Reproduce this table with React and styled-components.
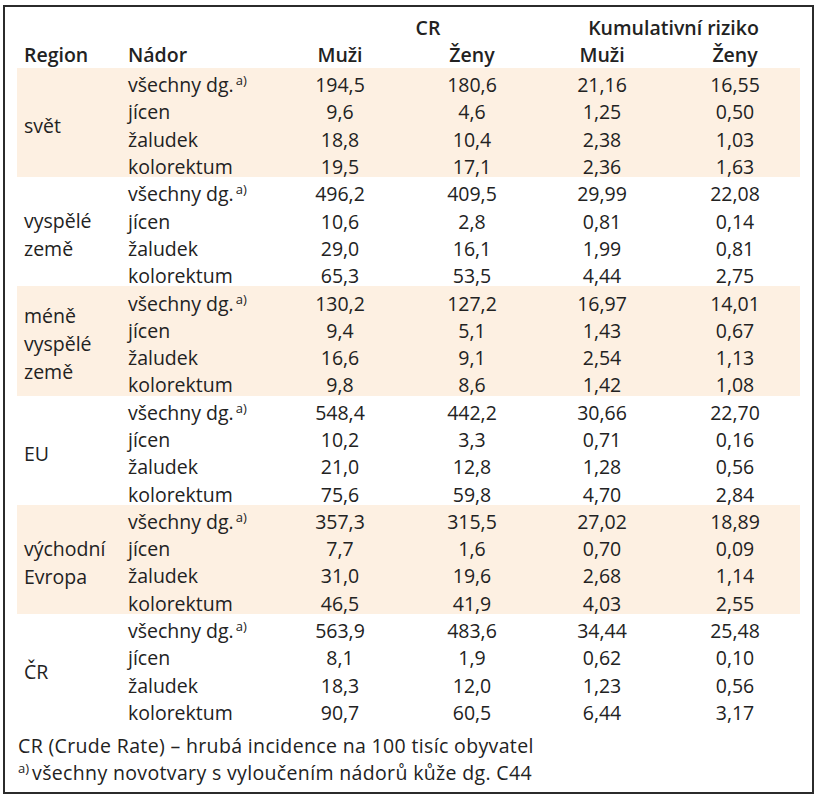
import React from 'react';
import styled, { createGlobalStyle } from 'styled-components';

const GlobalStyle = createGlobalStyle`
  html, body {
    margin: 0;
    padding: 0;
    background: #ffffff;
  }
  body {
    font-family: "Open Sans", "Noto Sans", sans-serif;
    color: #222222;
  }
`;

const Frame = styled.div`
  margin: 5px 0 0 3px;
  width: 811px;
  height: 789px;
  box-sizing: border-box;
  border: 2px solid #2b2b2b;
  padding: 7px 11px 0 12px;
`;

const Table = styled.table`
  width: 783px;
  border-collapse: collapse;
  table-layout: fixed;
  font-size: 19.5px;
`;

const HeadRow = styled.tr`
  height: 27px;
`;

const HeadCell = styled.th`
  padding: 0;
  font-weight: 600;
  text-align: ${(p) => p.$align || 'center'};
  padding-left: ${(p) => p.$pl || 0}px;
  line-height: 27px;
  white-space: nowrap;
`;

const Row = styled.tr`
  height: 27.3px;
  background: ${(p) => (p.$shaded ? '#fdf0e2' : 'transparent')};
`;

const RegionCell = styled.td`
  padding: 7px 0 0 7px;
  vertical-align: middle;
  line-height: 28px;
`;

const NameCell = styled.td`
  padding: 6px 0 0 7px;
  line-height: 21px;
  white-space: nowrap;
`;

const NumCell = styled.td`
  padding: 6px 0 0 ${(p) => p.$pl || 0}px;
  text-align: center;
  line-height: 21px;
`;

const Sup = styled.sup`
  font-size: 13px;
  vertical-align: 7px;
  line-height: 0;
  margin-left: 2px;
`;

const Notes = styled.div`
  margin-top: 9px;
  padding-left: 1px;
  font-size: 19.5px;
  letter-spacing: 0.35px;
`;

const NoteLine = styled.div`
  height: 27px;
  line-height: 27px;
  white-space: nowrap;
`;

const NoteSup = styled.sup`
  font-size: 13px;
  vertical-align: 7px;
  line-height: 0;
  margin-right: 3px;
  letter-spacing: 0;
`;

const groups = [
  {
    region: ['svět'],
    rows: [
      ['194,5', '180,6', '21,16', '16,55'],
      ['9,6', '4,6', '1,25', '0,50'],
      ['18,8', '10,4', '2,38', '1,03'],
      ['19,5', '17,1', '2,36', '1,63'],
    ],
  },
  {
    region: ['vyspělé', 'země'],
    rows: [
      ['496,2', '409,5', '29,99', '22,08'],
      ['10,6', '2,8', '0,81', '0,14'],
      ['29,0', '16,1', '1,99', '0,81'],
      ['65,3', '53,5', '4,44', '2,75'],
    ],
  },
  {
    region: ['méně', 'vyspělé', 'země'],
    rows: [
      ['130,2', '127,2', '16,97', '14,01'],
      ['9,4', '5,1', '1,43', '0,67'],
      ['16,6', '9,1', '2,54', '1,13'],
      ['9,8', '8,6', '1,42', '1,08'],
    ],
  },
  {
    region: ['EU'],
    rows: [
      ['548,4', '442,2', '30,66', '22,70'],
      ['10,2', '3,3', '0,71', '0,16'],
      ['21,0', '12,8', '1,28', '0,56'],
      ['75,6', '59,8', '4,70', '2,84'],
    ],
  },
  {
    region: ['východní', 'Evropa'],
    rows: [
      ['357,3', '315,5', '27,02', '18,89'],
      ['7,7', '1,6', '0,70', '0,09'],
      ['31,0', '19,6', '2,68', '1,14'],
      ['46,5', '41,9', '4,03', '2,55'],
    ],
  },
  {
    region: ['ČR'],
    rows: [
      ['563,9', '483,6', '34,44', '25,48'],
      ['8,1', '1,9', '0,62', '0,10'],
      ['18,3', '12,0', '1,23', '0,56'],
      ['90,7', '60,5', '6,44', '3,17'],
    ],
  },
];

const names = ['všechny dg.', 'jícen', 'žaludek', 'kolorektum'];

export default function App() {
  return (
    <>
      <GlobalStyle />
      <Frame>
        <Table>
          <colgroup>
            <col style={{ width: 104 }} />
            <col style={{ width: 162 }} />
            <col style={{ width: 114 }} />
            <col style={{ width: 150 }} />
            <col style={{ width: 110 }} />
            <col style={{ width: 143 }} />
          </colgroup>
          <thead>
            <HeadRow>
              <HeadCell />
              <HeadCell />
              <HeadCell colSpan={2} $pl={26}>CR</HeadCell>
              <HeadCell colSpan={2}>Kumulativní riziko</HeadCell>
            </HeadRow>
            <HeadRow>
              <HeadCell $align="left" $pl={7}>Region</HeadCell>
              <HeadCell $align="left" $pl={7}>Nádor</HeadCell>
              <HeadCell>Muži</HeadCell>
              <HeadCell>Ženy</HeadCell>
              <HeadCell>Muži</HeadCell>
              <HeadCell $pl={13}>Ženy</HeadCell>
            </HeadRow>
          </thead>
          <tbody>
            {groups.map((g, gi) =>
              g.rows.map((r, ri) => (
                <Row key={`${gi}-${ri}`} $shaded={gi % 2 === 0}>
                  {ri === 0 && (
                    <RegionCell rowSpan={4}>
                      {g.region.map((line, li) => (
                        <div key={li}>{line}</div>
                      ))}
                    </RegionCell>
                  )}
                  <NameCell>
                    {names[ri]}
                    {ri === 0 && <Sup>a)</Sup>}
                  </NameCell>
                  <NumCell>{r[0]}</NumCell>
                  <NumCell>{r[1]}</NumCell>
                  <NumCell>{r[2]}</NumCell>
                  <NumCell $pl={13}>{r[3]}</NumCell>
                </Row>
              ))
            )}
          </tbody>
        </Table>
        <Notes>
          <NoteLine>CR (Crude Rate) – hrubá incidence na 100 tisíc obyvatel</NoteLine>
          <NoteLine>
            <NoteSup>a)</NoteSup>všechny novotvary s vyloučením nádorů kůže dg. C44
          </NoteLine>
        </Notes>
      </Frame>
    </>
  );
}
